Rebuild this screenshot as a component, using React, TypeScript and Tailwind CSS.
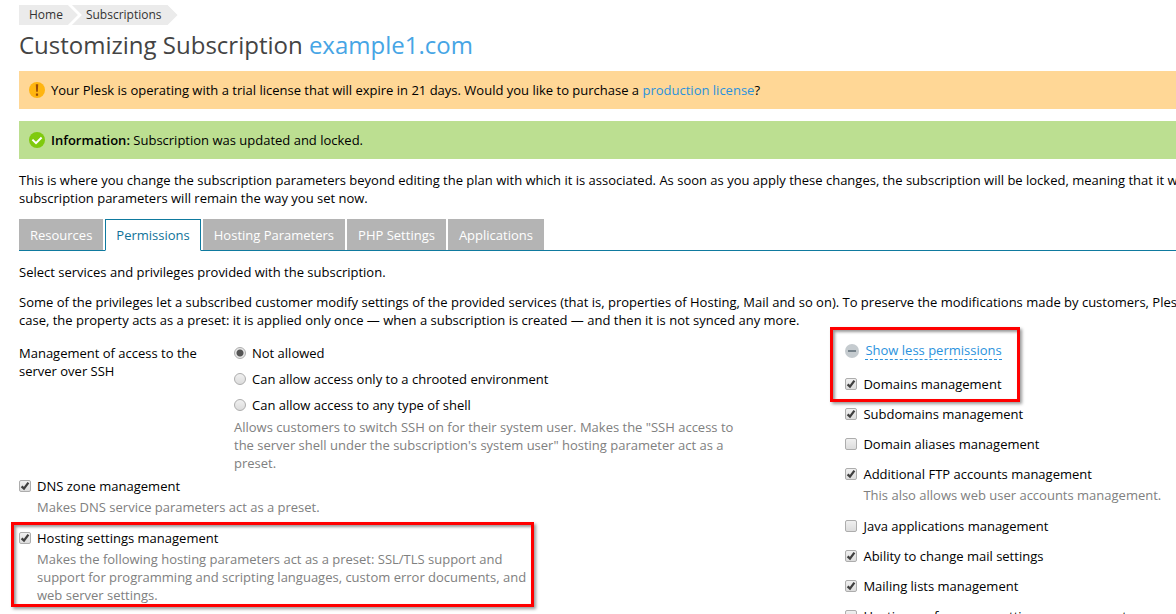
import { useId, useState, type ReactNode } from 'react'
import clsx from 'clsx'

type Permission = {
  label: string
  checked: boolean
  hint?: string
}

const TABS = ['Resources', 'Permissions', 'Hosting Parameters', 'PHP Settings', 'Applications']

const SHELL_OPTIONS = [
  'Not allowed',
  'Can allow access only to a chrooted environment',
  'Can allow access to any type of shell',
]

const MORE_PERMISSIONS: Permission[] = [
  { label: 'Subdomains management', checked: true },
  { label: 'Domain aliases management', checked: false },
  {
    label: 'Additional FTP accounts management',
    checked: true,
    hint: 'This also allows web user accounts management.',
  },
  { label: 'Java applications management', checked: false },
  { label: 'Ability to change mail settings', checked: true },
  { label: 'Mailing lists management', checked: true },
  { label: 'Hosting performance settings management', checked: false },
]

function WarningIcon() {
  return (
    <svg viewBox="0 0 16 16" className="size-4 shrink-0" aria-hidden="true">
      <circle cx="8" cy="8" r="8" fill="#ffb510" />
      <path d="M6.8 2.2h2.4l-.4 7.6H7.2zM6.9 11.4h2.2v2.3H6.9z" fill="#9a4a06" />
    </svg>
  )
}

function SuccessIcon() {
  return (
    <svg viewBox="0 0 16 16" className="size-4 shrink-0" aria-hidden="true">
      <circle cx="8" cy="8" r="8" fill="#7fca0e" />
      <path d="M3.4 7.6l3.6 3.6 5.6-5.7" fill="none" stroke="#fff" strokeWidth="2" />
    </svg>
  )
}

function MinusIcon() {
  return (
    <svg viewBox="0 0 14 14" className="size-3.5 shrink-0" aria-hidden="true">
      <circle cx="7" cy="7" r="7" fill="#c5cbcf" />
      <path d="M3 7h8" stroke="#76828a" strokeWidth="2" />
    </svg>
  )
}

function Banner({ icon, className, children }: { icon: ReactNode; className: string; children: ReactNode }) {
  return (
    <div className={clsx('mb-3 flex items-center gap-1.5 py-2.5 pl-2.5', className)}>
      {icon}
      <p className="whitespace-nowrap">{children}</p>
    </div>
  )
}

function Checkbox({ label, checked, hint }: Permission) {
  const id = useId()
  return (
    <div>
      <div className="flex items-center gap-1.5">
        <span className="grid size-3 shrink-0">
          <input
            id={id}
            type="checkbox"
            defaultChecked={checked}
            className="peer col-start-1 row-start-1 size-3 appearance-none rounded-xs border border-[#adadad] bg-linear-to-b from-[#f0f0f0] to-[#dcdcdc]"
          />
          <svg
            viewBox="0 0 12 12"
            className="pointer-events-none invisible col-start-1 row-start-1 size-3 peer-checked:visible"
            aria-hidden="true"
          >
            <path d="M2.6 6.3l2.4 2.3 4.4-6" fill="none" stroke="#3f3f3f" strokeWidth="2.3" />
          </svg>
        </span>
        <label htmlFor={id} className="whitespace-nowrap">
          {label}
        </label>
      </div>
      {hint && <p className="mt-[3px] max-w-[508px] pb-px pl-[18px] text-[#808080]">{hint}</p>}
    </div>
  )
}

// Red marker drawn over a group of settings; the parent must be relative.
function Highlight({ className }: { className: string }) {
  return (
    <div
      className={clsx(
        'pointer-events-none absolute border-3 border-[#f00] shadow-[2px_2px_3px_#0006,inset_2px_2px_3px_#0006]',
        className,
      )}
    />
  )
}

function ShellAccess() {
  const [value, setValue] = useState(SHELL_OPTIONS[0])
  return (
    <fieldset className="flex">
      <div className="w-[215px] shrink-0 pr-6">
        <span id="shell-label">Management of access to the server over SSH</span>
      </div>
      <div role="radiogroup" aria-labelledby="shell-label" className="max-w-[508px]">
        <div className="space-y-2">
          {SHELL_OPTIONS.map((option) => (
            <label key={option} className="flex items-center gap-1.5">
              <input
                type="radio"
                name="shell"
                checked={value === option}
                onChange={() => setValue(option)}
                className="size-3 shrink-0 appearance-none rounded-full border border-[#adadad] bg-linear-to-b from-[#f0f0f0] to-[#dcdcdc] checked:bg-[radial-gradient(circle,#555_0_3px,#e8e8e8_4px)]"
              />
              {option}
            </label>
          ))}
        </div>
        <p className="mt-1 text-[#808080]">
          Allows customers to switch SSH on for their system user. Makes the "SSH access to the server shell under the
          subscription's system user" hosting parameter act as a preset.
        </p>
      </div>
    </fieldset>
  )
}

export default function App() {
  const [tab, setTab] = useState('Permissions')

  return (
    <div className="h-screen overflow-hidden bg-white pt-[5px] pl-[19px] font-['Open_Sans',sans-serif] text-[13px] leading-[18px] text-black">
      <nav aria-label="Breadcrumb" className="flex text-xs leading-5 text-[#333]">
        <a
          href="#home"
          className="bg-[#ebebeb] pr-[15px] pl-2.5 [clip-path:polygon(0_0,calc(100%-10px)_0,100%_50%,calc(100%-10px)_100%,0_100%)]"
        >
          Home
        </a>
        <a
          href="#subscriptions"
          className="-ml-1.5 bg-[#ebebeb] pr-4 pl-3.5 [clip-path:polygon(0_0,calc(100%-10px)_0,100%_50%,calc(100%-10px)_100%,0_100%,10px_50%)]"
        >
          Subscriptions
        </a>
      </nav>

      <h1 className="mt-1 mb-2.5 text-2xl leading-8 text-[#444]">
        Customizing Subscription <span className="text-[#46a5e5]">example1.com</span>
      </h1>

      <Banner icon={<WarningIcon />} className="bg-[#ffd796]">
        Your Plesk is operating with a trial license that will expire in 21 days. Would you like to purchase a{' '}
        <a href="#license" className="text-[#2a92dd]">
          production license
        </a>
        ?
      </Banner>
      <Banner icon={<SuccessIcon />} className="bg-[#bcdf91]">
        <b className="font-semibold">Information:</b> Subscription was updated and locked.
      </Banner>

      <p className="whitespace-nowrap">
        This is where you change the subscription parameters beyond editing the plan with which it is associated. As
        soon as you apply these changes, the subscription will be locked, meaning that it will
        <br />
        subscription parameters will remain the way you set now.
      </p>

      <div role="tablist" className="mt-3 flex gap-0.5 border-b border-[#0f7a9f]">
        {TABS.map((name) => (
          <button
            key={name}
            type="button"
            role="tab"
            aria-selected={tab === name}
            onClick={() => setTab(name)}
            className={clsx(
              'border px-2.5 pt-1.5 whitespace-nowrap',
              tab === name
                ? '-mb-px border-[#0f7a9f] border-b-white bg-white pb-1.5 text-[#0f7299]'
                : 'border-transparent bg-[#b4b4b4] pb-[5px] text-white',
            )}
          >
            {name}
          </button>
        ))}
      </div>

      <p className="mt-3">Select services and privileges provided with the subscription.</p>
      <p className="mt-3 whitespace-nowrap">
        Some of the privileges let a subscribed customer modify settings of the provided services (that is, properties
        of Hosting, Mail and so on). To preserve the modifications made by customers, Plesk
        <br />
        case, the property acts as a preset: it is applied only once — when a subscription is created — and then it is
        not synced any more.
      </p>

      <form className="mt-3 grid grid-cols-[5fr_2fr]">
        <div className="pt-[3px]">
          <ShellAccess />
          <div className="mt-[5px] space-y-3">
            <Checkbox label="DNS zone management" checked hint="Makes DNS service parameters act as a preset." />
            <div className="relative max-w-[508px]">
              <Highlight className="-top-[7px] -right-[7px] -bottom-0.5 -left-2" />
              <Checkbox
                label="Hosting settings management"
                checked
                hint="Makes the following hosting parameters act as a preset: SSL/TLS support and support for programming and scripting languages, custom error documents, and web server settings."
              />
            </div>
          </div>
        </div>

        <div className="space-y-3">
          <div className="relative w-fit">
            <Highlight className="-top-3.5 -right-[18px] -bottom-[9px] -left-[15px]" />
            <button type="button" className="mb-[15px] flex items-center gap-1.5 text-[#2a92dd]">
              <MinusIcon />
              <span className="border-b border-dashed border-[#2a92dd]">Show less permissions</span>
            </button>
            <Checkbox label="Domains management" checked />
          </div>
          {MORE_PERMISSIONS.map((permission) => (
            <Checkbox key={permission.label} {...permission} />
          ))}
        </div>
      </form>
    </div>
  )
}
